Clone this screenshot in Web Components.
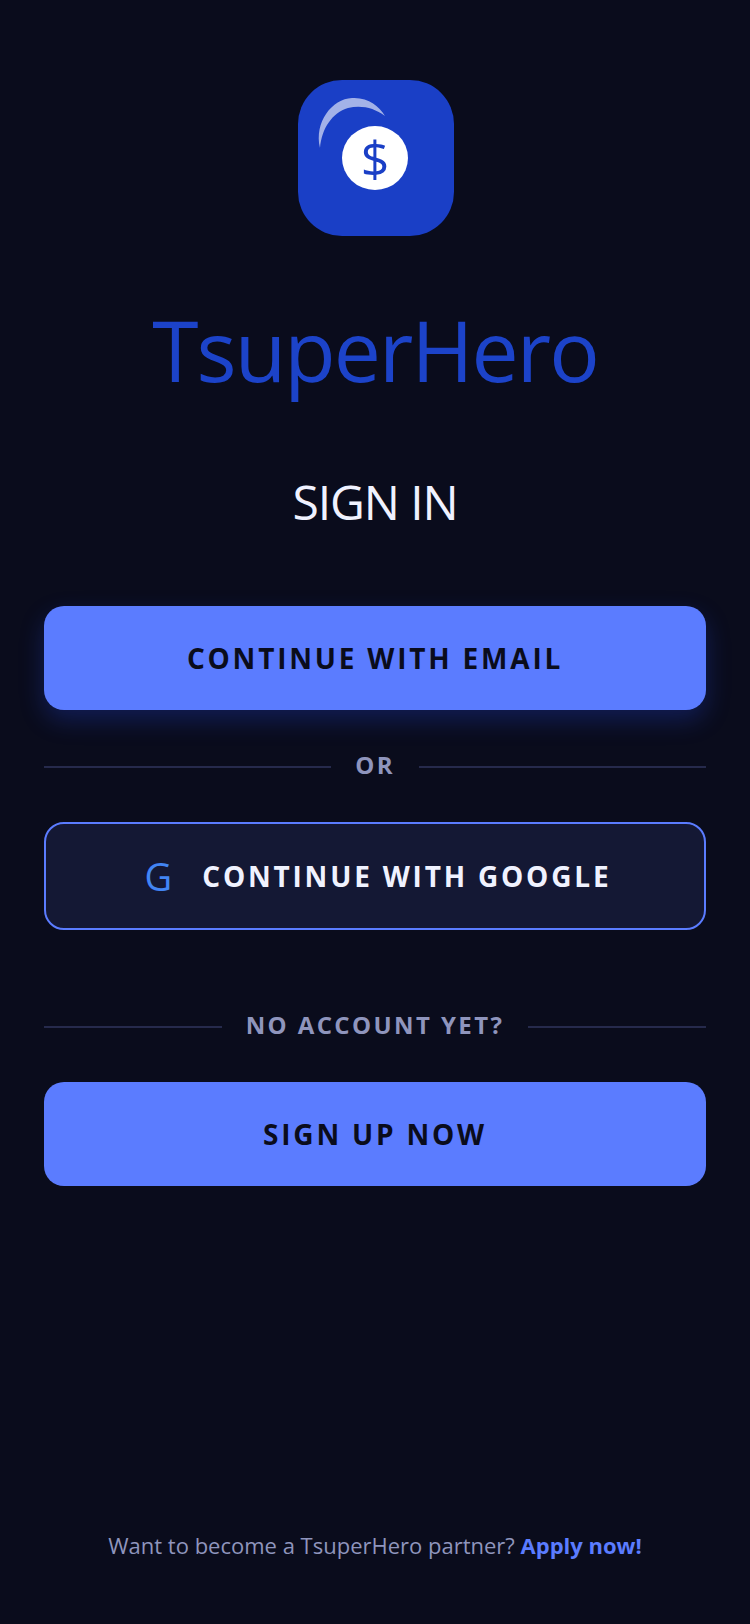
<!DOCTYPE html>
<html>
<head>
<meta charset="utf-8">
<title>TsuperHero</title>
<style>
    html, body { margin: 0; padding: 0; background: #0a0c1c; }
    body { font-family: "Open Sans", sans-serif; }
</style>
</head>
<body>
<signin-page>
    <app-logo slot="logo"></app-logo>
    <span slot="title">TsuperHero</span>
    <span slot="heading">SIGN IN</span>
    <action-button glow>CONTINUE WITH EMAIL</action-button>
    <rule-label style="margin-top: 38px">OR</rule-label>
    <action-button variant="outline" style="margin-top: 40px"><span slot="icon">G</span>CONTINUE WITH GOOGLE</action-button>
    <rule-label style="margin-top: 78px">NO ACCOUNT YET?</rule-label>
    <action-button style="margin-top: 40px">SIGN UP NOW</action-button>
    <partner-note slot="footer">Want to become a TsuperHero partner? <a>Apply now!</a></partner-note>
</signin-page>

<script>
const html = String.raw;

class SigninPage extends HTMLElement {
    constructor() {
        super();
        this.attachShadow({ mode: 'open' });
        this.shadowRoot.innerHTML = html`
            <style>
                :host {
                    display: flex;
                    flex-direction: column;
                    box-sizing: border-box;
                    height: 1624px;
                    padding: 80px 44px 0;
                    background: #0a0c1c;
                    overflow: hidden;
                }
                .title {
                    margin-top: 57px;
                    text-align: center;
                    font-size: 84px;
                    line-height: 114px;
                    letter-spacing: -1.9px;
                    color: #1c43c9;
                }
                .heading {
                    margin: 62px 0 71px;
                    text-align: center;
                    font-size: 48px;
                    line-height: 66px;
                    letter-spacing: -1.1px;
                    color: #f0f2ff;
                }
                .footer {
                    margin-top: auto;
                    padding-bottom: 64px;
                    text-align: center;
                }
            </style>
            <slot name="logo"></slot>
            <div class="title"><slot name="title"></slot></div>
            <div class="heading"><slot name="heading"></slot></div>
            <slot></slot>
            <div class="footer"><slot name="footer"></slot></div>
        `;
    }
}

class AppLogo extends HTMLElement {
    constructor() {
        super();
        this.attachShadow({ mode: 'open' });
        this.shadowRoot.innerHTML = html`
            <style>
                :host {
                    display: block;
                    position: relative;
                    width: 156px;
                    height: 156px;
                    margin-left: 254px;
                    border-radius: 44px;
                    background: #1a3fc6;
                }
                svg {
                    position: absolute;
                    left: 0;
                    top: 0;
                }
                .coin {
                    position: absolute;
                    left: 44px;
                    top: 46px;
                    width: 66px;
                    height: 64px;
                    display: flex;
                    align-items: center;
                    justify-content: center;
                    border-radius: 50%;
                    background: #fff;
                    color: #1a3fc6;
                    font-size: 50px;
                    line-height: 1;
                }
            </style>
            <svg width="156" height="156" viewBox="0 0 156 156">
                <path d="M22 68C16 42 34 19 54 18C70 17 81 26 87 36C76 28 64 25 50 28C34 33 24 48 22 68Z" fill="#fff" fill-opacity=".6"/>
            </svg>
            <div class="coin">$</div>
        `;
    }
}

class ActionButton extends HTMLElement {
    constructor() {
        super();
        this.attachShadow({ mode: 'open' });
        this.shadowRoot.innerHTML = html`
            <style>
                :host {
                    display: flex;
                    align-items: center;
                    justify-content: center;
                    gap: 30px;
                    box-sizing: border-box;
                    height: 104px;
                    border-radius: 20px;
                    background: #5b7cff;
                    color: #0a0c1c;
                    font-size: 28px;
                    font-weight: 700;
                    letter-spacing: 2.8px;
                }
                :host([glow]) {
                    box-shadow: 0 10px 24px rgba(40, 80, 255, .25);
                }
                :host([variant="outline"]) {
                    height: 108px;
                    padding-left: 6px;
                    background: #141834;
                    border: 2px solid #5b7cff;
                    color: #f0f2ff;
                }
                ::slotted([slot="icon"]) {
                    color: #4285f4;
                    font-size: 38px;
                    font-weight: 400;
                    letter-spacing: 0;
                }
            </style>
            <slot name="icon"></slot>
            <span><slot></slot></span>
        `;
    }
}

class RuleLabel extends HTMLElement {
    constructor() {
        super();
        this.attachShadow({ mode: 'open' });
        this.shadowRoot.innerHTML = html`
            <style>
                :host {
                    display: flex;
                    align-items: center;
                    gap: 24px;
                    color: #8f95bd;
                    font-size: 24px;
                    line-height: 34px;
                    font-weight: 700;
                    letter-spacing: 2.4px;
                }
                i {
                    flex: 1;
                    height: 2px;
                    margin-top: 3px;
                    background: #262a4c;
                }
            </style>
            <i></i><span><slot></slot></span><i></i>
        `;
    }
}

class PartnerNote extends HTMLElement {
    constructor() {
        super();
        this.attachShadow({ mode: 'open' });
        this.shadowRoot.innerHTML = html`
            <style>
                :host {
                    display: block;
                    color: #8f95bd;
                    font-size: 22px;
                    line-height: 30px;
                }
                ::slotted(a) {
                    color: #5b7cff;
                    font-weight: 700;
                }
            </style>
            <slot></slot>
        `;
    }
}

customElements.define('signin-page', SigninPage);
customElements.define('app-logo', AppLogo);
customElements.define('action-button', ActionButton);
customElements.define('rule-label', RuleLabel);
customElements.define('partner-note', PartnerNote);
</script>
</body>
</html>
